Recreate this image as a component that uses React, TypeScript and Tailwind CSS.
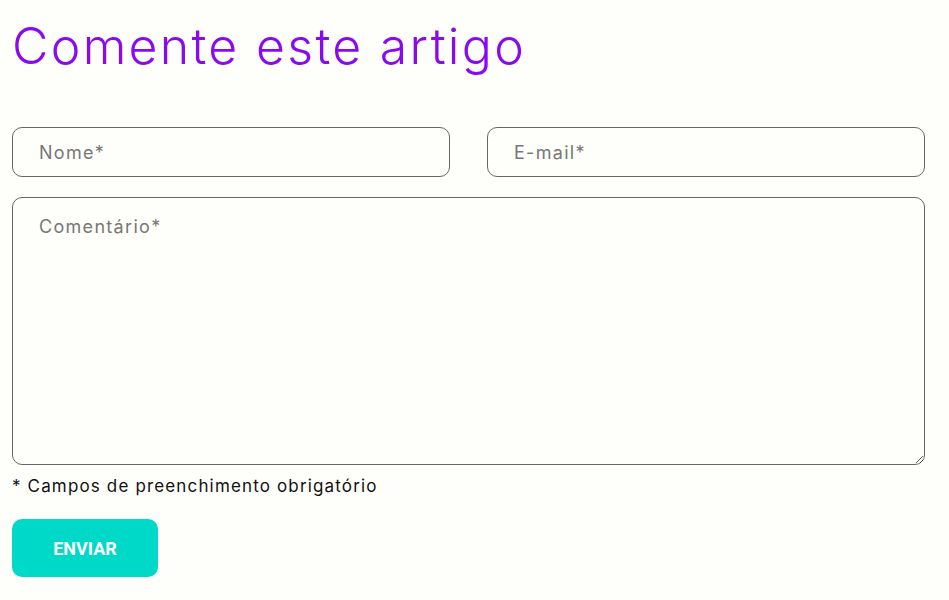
import React from "react";

export default function App() {
  return (
    <div className="min-h-[600px] w-full bg-[#fefefa] px-3 pt-[14px]" style={{ fontFamily: "Inter, 'Noto Sans', sans-serif" }}>
      <div className="w-[913px]">
        <h1 className="text-[50px] font-light leading-[64px] tracking-[2.3px] text-[#8a0af0]">Comente este artigo</h1>
        <div className="mt-[49px] flex gap-[37px]">
          <input
            placeholder="Nome*"
            className="h-[50px] w-[438px] rounded-[10px] border border-[#666] bg-transparent px-[26px] text-[18px] tracking-[1.3px] text-[#444] outline-none placeholder:text-[#777]"
          />
          <input
            placeholder="E-mail*"
            className="h-[50px] w-[438px] rounded-[10px] border border-[#666] bg-transparent px-[26px] text-[18px] tracking-[1.3px] text-[#444] outline-none placeholder:text-[#777]"
          />
        </div>
        <textarea
          placeholder="Comentário*"
          className="mt-[20px] block h-[268px] w-full rounded-[10px] border border-[#666] bg-transparent px-[26px] py-[15px] text-[18px] tracking-[1.3px] text-[#444] outline-none placeholder:text-[#777]"
        />
        <p className="mt-[9px] text-[17px] leading-[24px] tracking-[1.15px] text-[#111]">* Campos de preenchimento obrigatório</p>
        <button className="mt-[21px] flex h-[58px] w-[146px] items-center justify-center rounded-[10px] bg-[#00d9c8] text-[18px] font-bold text-white" style={{ fontFamily: "Roboto, sans-serif" }}>
          ENVIAR
        </button>
      </div>
    </div>
  );
}
